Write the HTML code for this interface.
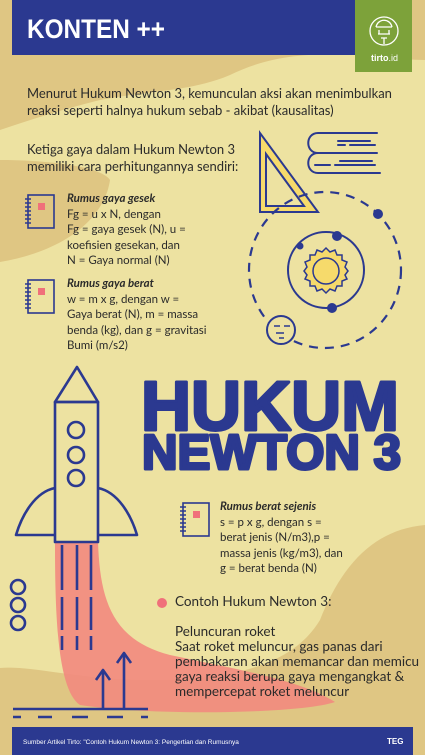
<!DOCTYPE html>
<html><head><meta charset="utf-8"><style>
*{margin:0;padding:0}
body{width:425px;height:755px;overflow:hidden;position:relative;background:#EDE2A1;font-family:"Lato","Liberation Sans",sans-serif;color:#2a2a2a}
svg{position:absolute;left:0;top:0}
.t{position:absolute;white-space:nowrap}
.p{font-size:13px;line-height:17px}
.r{font-size:11.5px;line-height:15.5px}
.r i{font-weight:bold}
</style></head><body>
<svg width="425" height="755" viewBox="0 0 425 755">
<path d="M0,0 H425 V60 C380,60 300,40 230,75 C190,92 150,90 100,100 C60,110 30,120 0,130 Z" fill="#DFC683"/>
<path d="M0,160 C40,160 100,165 110,180 C105,215 70,250 0,262 Z" fill="#DFC683"/>
<path d="M425,525 C370,530 340,570 320,620 C290,670 220,680 150,680 C80,680 30,665 0,668 V755 H425 Z" fill="#DFC683"/>
<path d="M55,542 L98,542 C100,600 112,640 170,655 C240,670 300,680 335,702 C300,714 150,716 80,705 C58,690 55,620 55,542 Z" fill="#F28A7E" opacity="0.9"/>
<rect x="12" y="0" width="343" height="55" fill="#2B3990"/>
<rect x="355" y="0" width="57" height="72" fill="#7DA23A"/>
<g fill="none" stroke="#fff" stroke-width="1.3">
<circle cx="384" cy="31" r="14"/>
<path d="M376,27 C378,18 390,18 392,27 M376,27 H392 M379,30 v4 M389,30 v4 M378,34 H390 M381,38 H387 M384,38 V44"/>
</g>
<path d="M260,133 L260,212 L318,212 Z" fill="#F6DA6B" stroke="#2B3990" stroke-width="2"/>
<path d="M266,154 L266,206 L304,206 Z" fill="#EDE2A1" stroke="#2B3990" stroke-width="2"/>
<g fill="none" stroke="#2B3990" stroke-width="2" stroke-linecap="round">
<path d="M377,133 H318 C305,133 305,153 318,153 H377 M377,153 H318 C305,153 305,173 318,173 H380"/>
<path d="M338,145 H345 M350,145 H375 M338,141 H370 M315,165 H330 M335,165 H375 M340,161 H372"/>
</g>
<ellipse cx="325" cy="270" rx="76" ry="78" fill="none" stroke="#2B3990" stroke-width="2.2" stroke-dasharray="9,7"/>
<circle cx="326" cy="270" r="38" fill="none" stroke="#2B3990" stroke-width="2"/>
<polygon points="326,248 330,252 335,250 337,255 342,255 342,260 347,262 345,267 348,271 345,275 347,279 342,281 342,286 337,286 335,291 330,289 326,293 322,289 317,291 315,286 310,286 310,281 305,279 307,275 304,271 307,267 305,262 310,260 310,255 315,255 317,250 322,252" fill="#F6DA6B" stroke="#2B3990" stroke-width="1.5"/>
<circle cx="326" cy="271" r="13" fill="#F6DA6B" stroke="#2B3990" stroke-width="1.5"/>
<g fill="#2B3990"><circle cx="337" cy="236" r="5"/><circle cx="300" cy="246" r="3.5"/><circle cx="332" cy="308" r="5"/><circle cx="378" cy="214" r="5"/></g>
<circle cx="281" cy="330" r="14" fill="#EDE2A1" stroke="#2B3990" stroke-width="2"/>
<path d="M274,326 H280 M284,326 H290 M276,333 H284 M279,338 H284" stroke="#2B3990" stroke-width="1.5"/>
<g id="nb" fill="none" stroke="#2B3990" stroke-width="1.6">
<rect x="28" y="195" width="26" height="33"/>
<path d="M25,199 H31 M25,203 H31 M25,207 H31 M25,211 H31 M25,215 H31 M25,219 H31 M25,223 H31"/>
</g>
<rect x="38" y="203" width="7" height="7" fill="#F0707A"/>
<use href="#nb" transform="translate(0,85)"/>
<rect x="38" y="288" width="7" height="7" fill="#F0707A"/>
<use href="#nb" transform="translate(155,308)"/>
<rect x="193" y="511" width="7" height="7" fill="#F0707A"/>
<g fill="none" stroke="#2B3990" stroke-width="2.6" stroke-linejoin="round">
<path d="M55,402 L77,367 L98,402 Z"/>
<rect x="55" y="402" width="43" height="140"/>
<circle cx="76" cy="430" r="8"/><circle cx="76" cy="455" r="8"/><circle cx="76" cy="478" r="8"/>
<path d="M55,488 C35,492 22,515 16,535 H55"/>
<path d="M98,488 C118,492 131,515 137,535 H98"/>
<circle cx="18" cy="587" r="7"/><circle cx="18" cy="605" r="7"/><circle cx="18" cy="623" r="7"/>
<path d="M62,545 V590 M77,545 V590 M91,545 V590 M62,597 V630 M77,597 V630 M91,597 V630 M62,636 V650 M77,636 V650 M91,636 V650"/>
<path d="M13,709 H148 M103,709 V672 M124,709 V655"/>
<path d="M96,680 L103,670 L110,680 M117,663 L124,653 L131,663"/>
<path d="M13,717 H21 M38,717 H52 M72,717 H88 M107,717 H123 M141,717 H148"/>
</g>
<circle cx="162" cy="603" r="5" fill="#F0707A"/>
<rect x="12" y="727" width="401" height="28" fill="#2B3990"/>
<g font-family="Liberation Sans" font-weight="900" fill="#2B3990" stroke="#2B3990" stroke-width="3" stroke-linejoin="round">
<text x="141" y="430" font-size="70" textLength="258" lengthAdjust="spacingAndGlyphs">HUKUM</text>
<text x="142" y="469" font-size="49" textLength="259" lengthAdjust="spacingAndGlyphs">NEWTON 3</text>
</g>
<text x="27" y="38" font-family="Liberation Sans" font-weight="bold" font-size="27" fill="#fff" textLength="138" lengthAdjust="spacingAndGlyphs">KONTEN ++</text>
<text x="371" y="61" font-family="Liberation Sans" font-weight="bold" font-size="9" fill="#fff">tirto<tspan font-weight="normal">.id</tspan></text>
<text x="23" y="744" font-family="Liberation Sans" font-size="6.5" fill="#fff">Sumber Artikel Tirto: "Contoh Hukum Newton 3: Pengertian dan Rumusnya</text>
<text x="387" y="744" font-family="Liberation Sans" font-weight="bold" font-size="8" fill="#fff">TEG</text>
</svg>
<div class="t p" style="left:27px;top:85px">Menurut Hukum Newton 3, kemunculan aksi akan menimbulkan<br>reaksi seperti halnya hukum sebab - akibat (kausalitas)</div>
<div class="t p" style="left:27px;top:141px">Ketiga gaya dalam Hukum Newton 3<br>memiliki cara perhitungannya sendiri:</div>
<div class="t r" style="left:67px;top:191px"><i>Rumus gaya gesek</i><br>Fg = u x N, dengan<br>Fg = gaya gesek (N), u =<br>koefisien gesekan, dan<br>N = Gaya normal (N)</div>
<div class="t r" style="left:67px;top:276px"><i>Rumus gaya berat</i><br>w = m x g, dengan w =<br>Gaya berat (N), m = massa<br>benda (kg), dan g = gravitasi<br>Bumi (m/s2)</div>
<div class="t r" style="left:220px;top:499px"><i>Rumus berat sejenis</i><br>s = p x g, dengan s =<br>berat jenis (N/m3),p =<br>massa jenis (kg/m3), dan<br>g = berat benda (N)</div>
<div class="t p" style="left:175px;top:594px;font-size:13.5px;line-height:15px">Contoh Hukum Newton 3:<br><br>Peluncuran roket<br>Saat roket meluncur, gas panas dari<br>pembakaran akan memancar dan memicu<br>gaya reaksi berupa gaya mengangkat &amp;<br>mempercepat roket meluncur</div>
</body></html>
